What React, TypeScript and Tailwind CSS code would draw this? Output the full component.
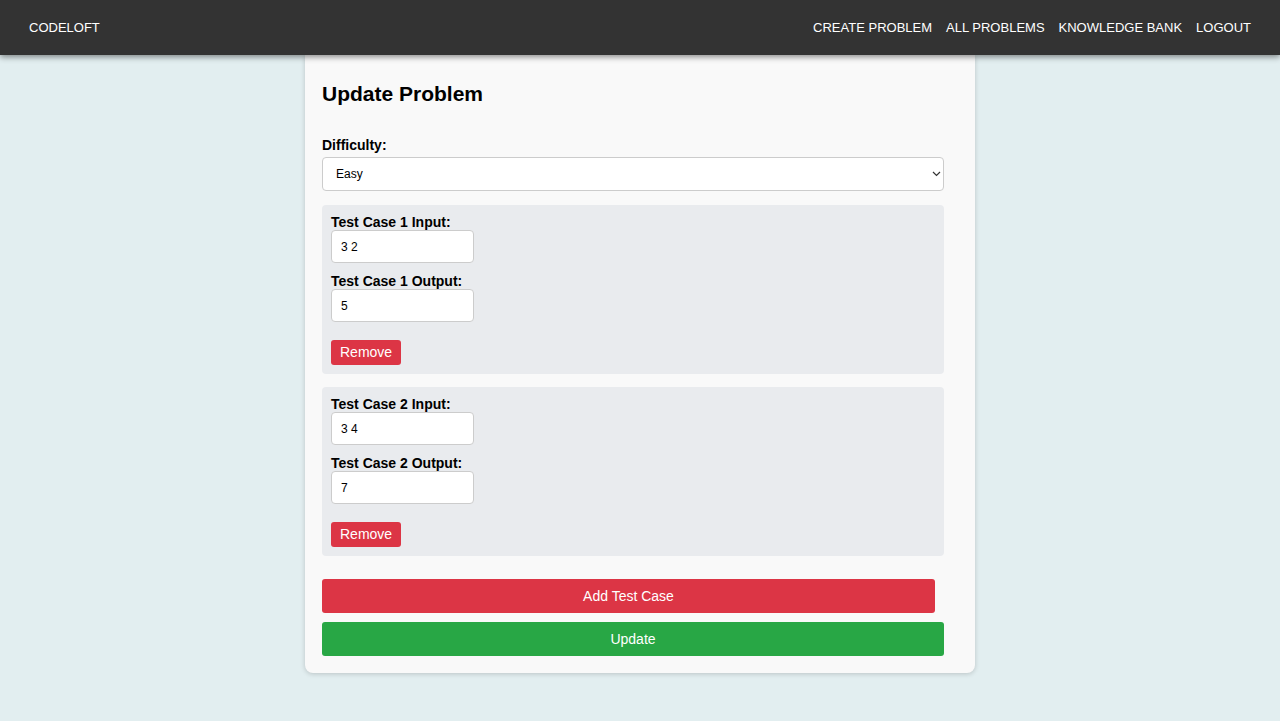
import React from 'react';

const font = { fontFamily: '"Liberation Sans", Arial, Helvetica, sans-serif' };

function TestCase({ n, input, output }: { n: number; input: string; output: string }) {
  return (
    <div className="bg-[#e9ebee] rounded-[4px] px-[9px] pt-[9px] pb-[9px]">
      <label className="block text-[14px] font-bold leading-[16px] text-black">Test Case {n} Input:</label>
      <input
        defaultValue={input}
        className="block w-[143px] h-[33px] px-[9px] text-[12px] bg-white border border-[#ccc] rounded-[4px] text-black outline-none"
      />
      <label className="block text-[14px] font-bold leading-[16px] text-black mt-[10px]">Test Case {n} Output:</label>
      <input
        defaultValue={output}
        className="block w-[143px] h-[33px] px-[9px] text-[12px] bg-white border border-[#ccc] rounded-[4px] text-black outline-none"
      />
      <button className="mt-[18px] h-[25px] px-[9px] bg-[#dc3545] text-white text-[14px] leading-[25px] rounded-[3px]">
        Remove
      </button>
    </div>
  );
}

export default function App() {
  return (
    <div className="min-h-screen bg-[#e2eef0]" style={font}>
      <nav className="relative z-10 h-[55px] bg-[#333333] flex items-center justify-between px-[29px] shadow-[0_2px_6px_rgba(0,0,0,0.45)]">
        <span className="text-[13px] text-white">CODELOFT</span>
        <div className="flex items-center gap-[14px] text-[13px] text-white">
          <a>CREATE PROBLEM</a>
          <a>ALL PROBLEMS</a>
          <a>KNOWLEDGE BANK</a>
          <a>LOGOUT</a>
        </div>
      </nav>

      <div className="flex justify-center">
        <div className="w-[670px] bg-[#f9f9f9] rounded-b-[8px] shadow-[0_1px_5px_rgba(0,0,0,0.18)] pl-[17px] pr-[31px] pt-[25px] pb-[17px]">
          <h2 className="text-[21px] font-bold leading-[27px] text-black">Update Problem</h2>

          <label className="block mt-[29px] text-[14px] font-bold leading-[18px] text-black">Difficulty:</label>
          <div className="relative mt-[3px]">
            <select
              defaultValue="Easy"
              className="appearance-none block w-full h-[34px] pl-[13px] text-[12px] bg-white border border-[#ccc] rounded-[4px] text-black outline-none"
            >
              <option>Easy</option>
              <option>Medium</option>
              <option>Hard</option>
            </select>
            <svg className="absolute right-[3px] top-[14px] pointer-events-none" width="9" height="6" viewBox="0 0 9 6">
              <path d="M1 1 L4.5 4.5 L8 1" fill="none" stroke="#333" strokeWidth="1.2" />
            </svg>
          </div>

          <div className="mt-[14px] flex flex-col gap-[13px]">
            <TestCase n={1} input="3 2" output="5" />
            <TestCase n={2} input="3 4" output="7" />
          </div>

          <button className="mt-[23px] block w-[613px] h-[34px] bg-[#dc3545] text-white text-[14px] rounded-[3px]">
            Add Test Case
          </button>
          <button className="mt-[9px] block w-full h-[34px] bg-[#28a745] text-white text-[14px] rounded-[3px]">
            Update
          </button>
        </div>
      </div>
    </div>
  );
}
